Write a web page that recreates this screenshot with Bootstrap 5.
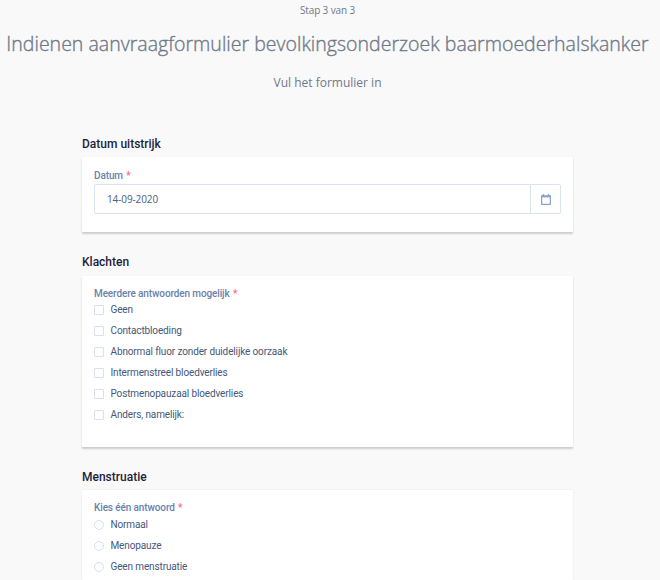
<!DOCTYPE html>
<html lang="nl">

<head>
    <meta charset="UTF-8">
    <meta name="viewport" content="width=device-width, initial-scale=1.0">
    <title>Aanvraagformulier</title>
    <link href="https://cdn.jsdelivr.net/npm/bootstrap@5.3.0/dist/css/bootstrap.min.css" rel="stylesheet">
    <style>
        body {
            height: 580px;
            background: #f9f9f9;
            font-family: Roboto, "Liberation Sans", sans-serif;
            font-size: 10px;
            color: #455877;
        }

        .page {
            width: 655px;
            height: 580px;
        }

        .intro {
            height: 134px;
            font-family: "Open Sans", "Noto Sans", sans-serif;
            color: #6f7889;
            white-space: nowrap;
        }

        .step {
            font-size: 10px;
            letter-spacing: -.13px;
            line-height: 20px;
        }

        .intro h1 {
            font-size: 19.5px;
            font-weight: 300;
            -webkit-text-stroke: .35px #6f7889;
            letter-spacing: .02px;
            line-height: 30px;
            margin: 9px 0 0;
        }

        .intro p {
            font-size: 12px;
            line-height: 20px;
            margin: 14px 0 0;
        }

        .form-area {
            width: 491px;
        }

        .form-area h2 {
            font-size: 12px;
            font-weight: 500;
            line-height: 20px;
            color: #1b1f3b;
            margin: 0 0 3px;
        }

        .panel {
            padding: 12px;
            border-radius: 1px;
            background: #fff;
            box-shadow: 0 1.5px 2px rgba(0, 0, 0, .18);
        }

        .panel-date {
            height: 75px;
            margin-bottom: 20px;
        }

        .panel-complaints {
            height: 171px;
            margin: 4px 0 20px;
        }

        .panel-cycle {
            height: 90px;
            box-shadow: 0 0 2px rgba(0, 0, 0, .1);
        }

        .panel .form-label {
            display: block;
            font-size: 10px;
            letter-spacing: -.12px;
            font-weight: 500;
            line-height: 12px;
            color: #6a82ab;
            padding-top: 1px;
            margin: 0 0 2px;
        }

        .panel-complaints .form-label {
            padding-top: 0;
            margin-bottom: -1px;
        }

        .panel-cycle .form-label {
            padding-top: 0;
            margin-bottom: 0;
        }

        .required {
            color: #ff6b7c;
            margin-left: 1px;
        }

        .date-group {
            height: 30px;
        }

        .date-group .form-control {
            font-family: "Open Sans", "Noto Sans", sans-serif;
            font-size: 10px;
            letter-spacing: -.12px;
            color: #4b607f;
            padding: 0 12px;
            border-color: #d9e4f2;
            border-radius: 2px;
        }

        .date-group .btn {
            width: 31px;
            padding: 0;
            background: #fff;
            border-color: #d9e4f2;
            border-radius: 2px;
        }

        .panel .form-check {
            display: flex;
            align-items: center;
            height: 21px;
            min-height: 0;
            padding: 0;
            margin: 0;
        }

        .panel .form-check-input {
            float: none;
            width: 10px;
            height: 10px;
            margin: 0 6.5px 0 0;
            border-color: #d5e1f1;
        }

        .panel .form-check-input[type=checkbox] {
            border-radius: 1px;
        }

        .form-check-label {
            letter-spacing: -.13px;
            line-height: 12px;
        }
    </style>
</head>

<body class="overflow-hidden">
    <div class="page">
        <header class="intro text-center">
            <div class="step">Stap 3 van 3</div>
            <h1>Indienen aanvraagformulier bevolkingsonderzoek baarmoederhalskanker</h1>
            <p>Vul het formulier in</p>
        </header>

        <form class="form-area mx-auto">
            <h2>Datum uitstrijk</h2>
            <div class="panel panel-date">
                <label for="date" class="form-label">Datum <span class="required">*</span></label>
                <div class="input-group date-group">
                    <input type="text" class="form-control" id="date" value="14-09-2020">
                    <button type="button" class="btn d-flex align-items-center justify-content-center" aria-label="Kalender">
                        <svg width="10" height="11" viewBox="0 0 10 11" fill="none" stroke="#8ba2c9">
                            <rect x=".6" y="2.1" width="8.8" height="8.3" rx=".5" stroke-width="1.3" />
                            <path d="M0 2.4h10" stroke-width="2" />
                            <path d="M2.5 0v2M7.5 0v2" stroke-width="1.4" />
                        </svg>
                    </button>
                </div>
            </div>

            <h2>Klachten</h2>
            <div class="panel panel-complaints">
                <div class="form-label">Meerdere antwoorden mogelijk <span class="required">*</span></div>
                <div class="options">
                    <div class="form-check">
                        <input class="form-check-input" type="checkbox" id="c1">
                        <label class="form-check-label" for="c1">Geen</label>
                    </div>
                    <div class="form-check">
                        <input class="form-check-input" type="checkbox" id="c2">
                        <label class="form-check-label" for="c2">Contactbloeding</label>
                    </div>
                    <div class="form-check">
                        <input class="form-check-input" type="checkbox" id="c3">
                        <label class="form-check-label" for="c3">Abnormal fluor zonder duidelijke oorzaak</label>
                    </div>
                    <div class="form-check">
                        <input class="form-check-input" type="checkbox" id="c4">
                        <label class="form-check-label" for="c4">Intermenstreel bloedverlies</label>
                    </div>
                    <div class="form-check">
                        <input class="form-check-input" type="checkbox" id="c5">
                        <label class="form-check-label" for="c5">Postmenopauzaal bloedverlies</label>
                    </div>
                    <div class="form-check">
                        <input class="form-check-input" type="checkbox" id="c6">
                        <label class="form-check-label" for="c6">Anders, namelijk:</label>
                    </div>
                </div>
            </div>

            <h2>Menstruatie</h2>
            <div class="panel panel-cycle">
                <div class="form-label">Kies één antwoord <span class="required">*</span></div>
                <div class="options">
                    <div class="form-check">
                        <input class="form-check-input" type="radio" name="cycle" id="m1">
                        <label class="form-check-label" for="m1">Normaal</label>
                    </div>
                    <div class="form-check">
                        <input class="form-check-input" type="radio" name="cycle" id="m2">
                        <label class="form-check-label" for="m2">Menopauze</label>
                    </div>
                    <div class="form-check">
                        <input class="form-check-input" type="radio" name="cycle" id="m3">
                        <label class="form-check-label" for="m3">Geen menstruatie</label>
                    </div>
                </div>
            </div>
        </form>
    </div>

    <script src="https://cdn.jsdelivr.net/npm/bootstrap@5.3.0/dist/js/bootstrap.bundle.min.js"></script>
</body>

</html>
